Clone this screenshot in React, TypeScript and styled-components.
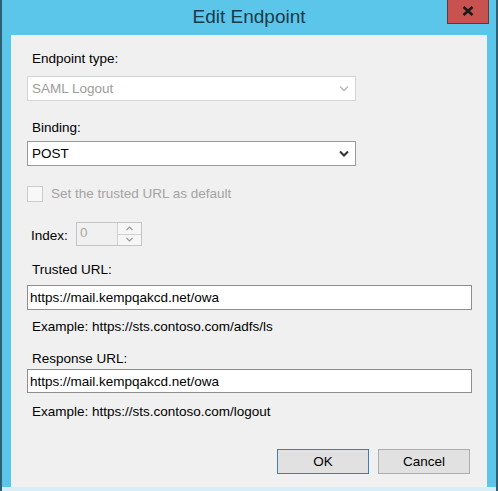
import React from 'react';
import styled, { createGlobalStyle } from 'styled-components';

const GlobalStyle = createGlobalStyle`
  html, body {
    margin: 0;
    padding: 0;
    background: #5cc6ea;
  }
  body {
    font-family: "Liberation Sans", Arial, sans-serif;
    font-size: 13.5px;
    color: #000;
  }
`;

const Window = styled.div`
  width: 498px;
  height: 491px;
  box-sizing: border-box;
  display: flex;
  flex-direction: column;
  background: #5cc6ea;
  border-left: 2px solid #2f5f72;
  border-right: 2px solid #2f5f72;
  overflow: hidden;
`;

const TitleBar = styled.div`
  height: 35px;
  flex: none;
  display: grid;
  grid-template-columns: 1fr auto 1fr;
  align-items: start;
`;

const Title = styled.div`
  grid-column: 2;
  font-size: 19px;
  line-height: 34px;
  color: #1b3a4b;
`;

const CloseButton = styled.div`
  grid-column: 3;
  justify-self: end;
  margin-right: 7px;
  margin-top: -1px;
  width: 42px;
  height: 25px;
  box-sizing: border-box;
  background: #c7524f;
  border: 1px solid #5a3a3a;
  border-top: none;
  display: flex;
  align-items: center;
  justify-content: center;
`;

const Content = styled.div`
  flex: 1;
  margin: 0 9px;
  padding: 16px 17px 0 15px;
  background: #f0f0f0;
  border-left: 1px solid #e4f3f8;
  display: flex;
  flex-direction: column;
  align-items: flex-start;
`;

const BottomEdge = styled.div`
  height: 4px;
  flex: none;
  background: #d6eef6;
`;

const Label = styled.div<{ $mt?: number; $muted?: boolean }>`
  margin-top: ${(p) => p.$mt ?? 0}px;
  padding-left: 5px;
  line-height: 16px;
  height: 16px;
  white-space: nowrap;
  color: ${(p) => (p.$muted ? '#a3a3a3' : '#000')};
`;

const Combo = styled.div<{ $mt: number; $disabled?: boolean }>`
  margin-top: ${(p) => p.$mt}px;
  width: 329px;
  height: 25px;
  box-sizing: border-box;
  background: #fff;
  border: 1px solid ${(p) => (p.$disabled ? '#d4d4d4' : '#9a9a9a')};
  display: flex;
  align-items: center;
  padding: 0 6px 0 4px;
  color: ${(p) => (p.$disabled ? '#9c9c9c' : '#000')};
`;

const ComboText = styled.span`
  flex: 1;
  line-height: 16px;
`;

const TextBox = styled.input<{ $mt: number; $h?: number }>`
  margin-top: ${(p) => p.$mt}px;
  width: 445px;
  height: ${(p) => p.$h ?? 25}px;
  box-sizing: border-box;
  border: 1px solid #8e8e8e;
  background: #fff;
  padding: 0 2px;
  font: inherit;
  color: #000;
  outline: none;
`;

const CheckRow = styled.label<{ $mt: number }>`
  margin-top: ${(p) => p.$mt}px;
  display: flex;
  align-items: center;
  gap: 8px;
  color: #a3a3a3;
  line-height: 16px;
`;

const CheckBox = styled.span`
  width: 16px;
  height: 16px;
  box-sizing: border-box;
  border: 1px solid #cbcbcb;
  background: #f8f8f8;
`;

const IndexRow = styled.div<{ $mt: number }>`
  margin-top: ${(p) => p.$mt}px;
  display: flex;
  align-items: flex-start;
`;

const IndexLabel = styled.span`
  width: 45px;
  padding-left: 4px;
  margin-top: 6px;
  line-height: 16px;
`;

const Spin = styled.div`
  width: 66px;
  height: 24px;
  box-sizing: border-box;
  border: 1px solid #c4c4c4;
  background: #f0f0f0;
  display: flex;
`;

const SpinValue = styled.span`
  flex: 1;
  padding: 2px 0 0 3px;
  color: #a8a8a8;
  line-height: 16px;
`;

const SpinButtons = styled.div`
  width: 23px;
  display: flex;
  flex-direction: column;
  border-left: 1px solid #d0d0d0;
`;

const SpinButton = styled.div<{ $top?: boolean }>`
  flex: 1;
  display: flex;
  align-items: center;
  justify-content: center;
  background: #f6f6f6;
  border-bottom: ${(p) => (p.$top ? '1px solid #d0d0d0' : 'none')};
`;

const ButtonRow = styled.div<{ $mt: number }>`
  margin-top: ${(p) => p.$mt}px;
  align-self: flex-end;
  display: flex;
  gap: 9px;
`;

const Button = styled.button<{ $default?: boolean }>`
  width: ${(p) => (p.$default ? 92 : 92)}px;
  height: 25px;
  box-sizing: border-box;
  border: 1px solid ${(p) => (p.$default ? '#3d7fb4' : '#adadad')};
  background: #e1e1e1;
  font: inherit;
  color: #000;
  padding: 0;
`;

const Chevron = ({ color, width }: { color: string; width: number }) => (
  <svg width="10" height="7" viewBox="0 0 10 7">
    <polyline points="1,1.5 5,5.5 9,1.5" fill="none" stroke={color} strokeWidth={width} />
  </svg>
);

const SmallArrow = ({ up }: { up?: boolean }) => (
  <svg width="7" height="5" viewBox="0 0 7 5">
    <polyline
      points={up ? '0.5,4 3.5,1 6.5,4' : '0.5,1 3.5,4 6.5,1'}
      fill="none"
      stroke="#9a9a9a"
      strokeWidth="1.2"
    />
  </svg>
);

export default function App() {
  return (
    <>
      <GlobalStyle />
      <Window>
        <TitleBar>
          <Title>Edit Endpoint</Title>
          <CloseButton>
            <svg width="12" height="10" viewBox="0 0 12 10">
              <path d="M1.5 1 L10.5 9 M10.5 1 L1.5 9" stroke="#1a1a1a" strokeWidth="2.6" />
            </svg>
          </CloseButton>
        </TitleBar>
        <Content>
          <Label>Endpoint type:</Label>
          <Combo $mt={9} $disabled>
            <ComboText>SAML Logout</ComboText>
            <Chevron color="#b5b5b5" width={1.3} />
          </Combo>

          <Label $mt={19}>Binding:</Label>
          <Combo $mt={5}>
            <ComboText>POST</ComboText>
            <Chevron color="#333" width={2} />
          </Combo>

          <CheckRow $mt={20}>
            <CheckBox />
            Set the trusted URL as default
          </CheckRow>

          <IndexRow $mt={20}>
            <IndexLabel>Index:</IndexLabel>
            <Spin>
              <SpinValue>0</SpinValue>
              <SpinButtons>
                <SpinButton $top>
                  <SmallArrow up />
                </SpinButton>
                <SpinButton>
                  <SmallArrow />
                </SpinButton>
              </SpinButtons>
            </Spin>
          </IndexRow>

          <Label $mt={16}>Trusted URL:</Label>
          <TextBox $mt={7} readOnly value="https://mail.kempqakcd.net/owa" />
          <Label $mt={9}>Example: https://sts.contoso.com/adfs/ls</Label>

          <Label $mt={16}>Response URL:</Label>
          <TextBox $mt={2} $h={24} readOnly value="https://mail.kempqakcd.net/owa" />
          <Label $mt={11}>Example: https://sts.contoso.com/logout</Label>

          <ButtonRow $mt={29}>
            <Button $default>OK</Button>
            <Button>Cancel</Button>
          </ButtonRow>
        </Content>
        <BottomEdge />
      </Window>
    </>
  );
}
